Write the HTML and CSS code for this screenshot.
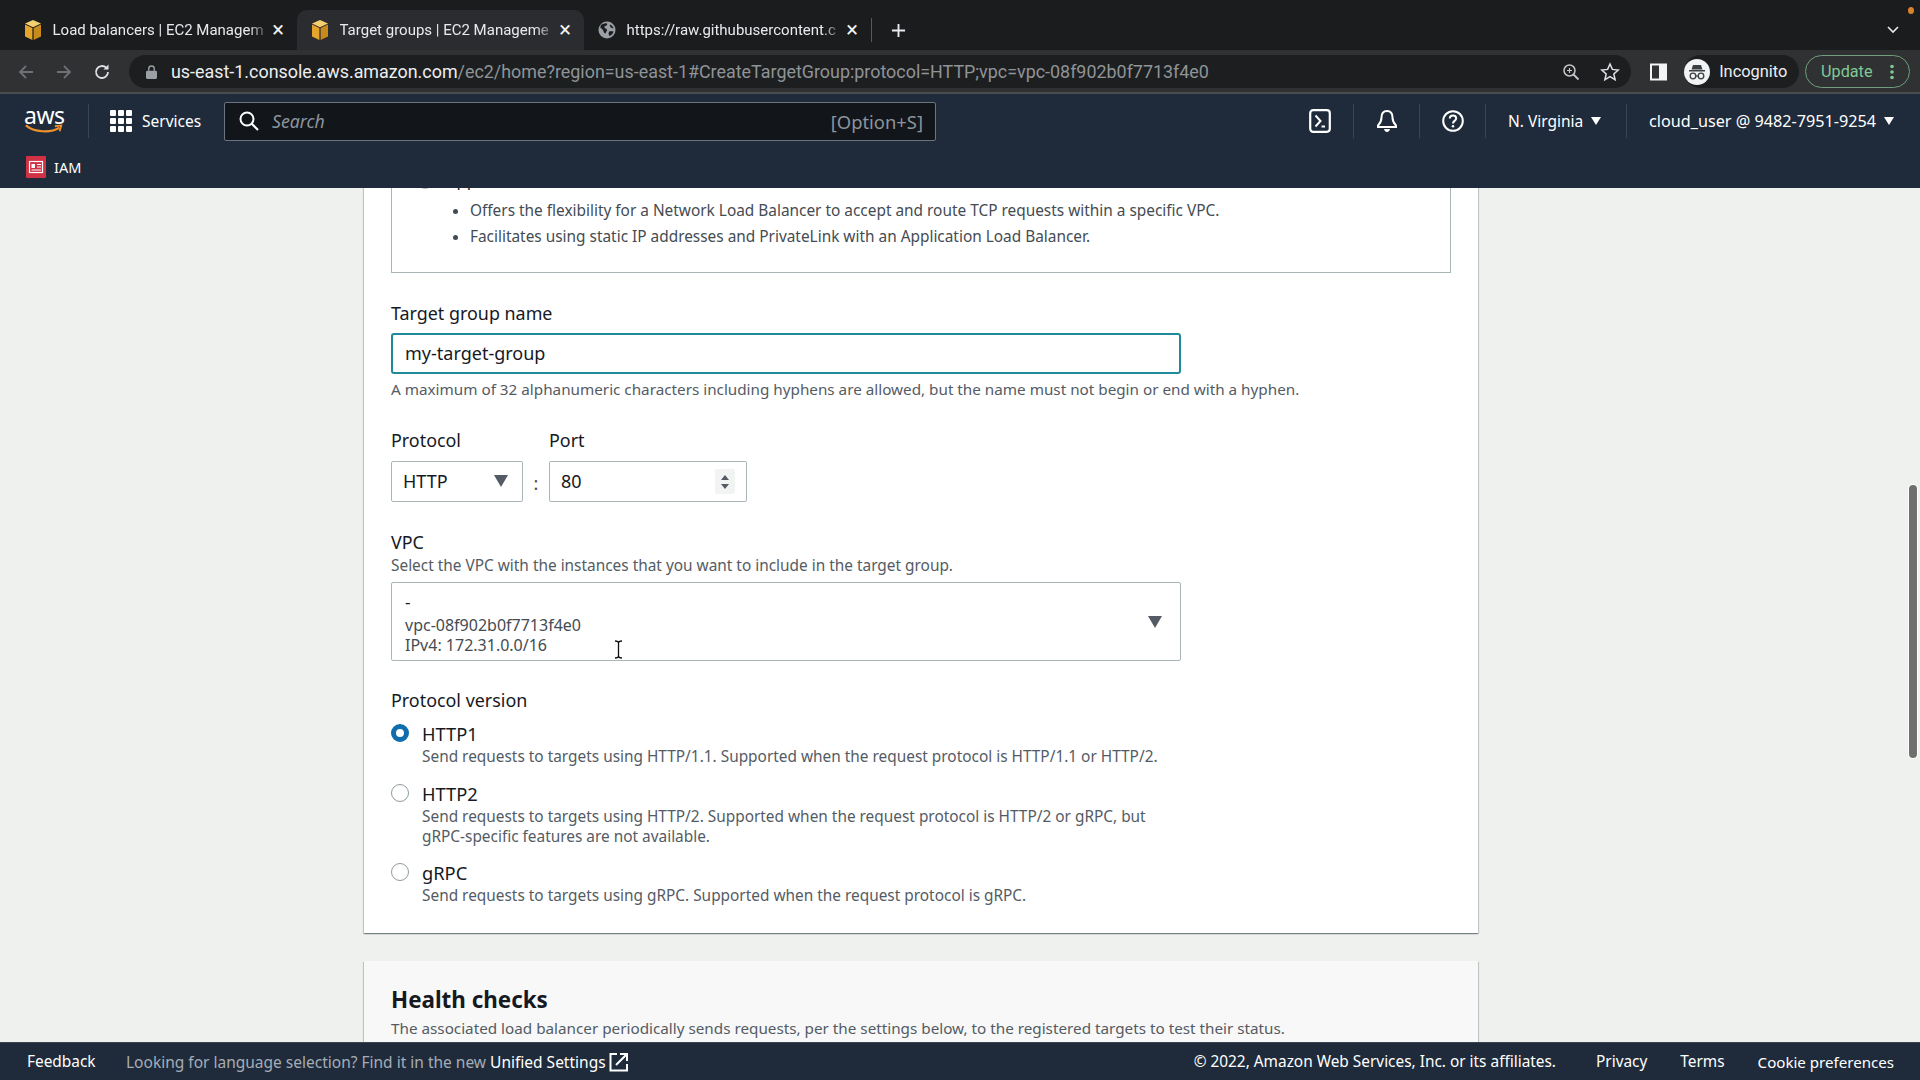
FILE: index.html
```html
<!DOCTYPE html>
<html lang="en">
<head>
<meta charset="utf-8">
<title>Target groups | EC2 Management Console</title>
<link rel="stylesheet" href="styles.css">
</head>
<body>
<header class="browser">
  <div class="tabstrip">
    <div class="tab">
      <svg class="tab-icon" viewBox="0 0 18 20"><path fill="#f3cf6d" d="M9 0l8 3.6-8 3.6-8-3.6z"/><path fill="#e5a52c" d="M1 4.6l7.4 3.4V20L1 16.4z"/><path fill="#c98a1c" d="M17 4.6L9.6 8V20l7.4-3.6z"/></svg>
      <span class="tab-title">Load balancers | EC2 Managem</span>
      <span class="tab-close">×</span>
    </div>
    <div class="tab tab-active">
      <svg class="tab-icon" viewBox="0 0 18 20"><path fill="#f3cf6d" d="M9 0l8 3.6-8 3.6-8-3.6z"/><path fill="#e5a52c" d="M1 4.6l7.4 3.4V20L1 16.4z"/><path fill="#c98a1c" d="M17 4.6L9.6 8V20l7.4-3.6z"/></svg>
      <span class="tab-title">Target groups | EC2 Manageme</span>
      <span class="tab-close">×</span>
    </div>
    <div class="tab">
      <svg class="tab-icon" viewBox="0 0 18 18"><circle cx="9" cy="9" r="8.5" fill="#9aa0a6"/><path fill="#1c1d1f" d="M3 4c2-1 4-2 6-1.500 1 1-1 2.500-2.500 3-1 1 1.500 2 2.500 3 .5 1.500-1 2-1.500 4-1.500 0-2-2-2.500-3.500C4 8 3 7 2.200 6.500zM12 3.500c1.500.5 3 2 3.500 3.500-1 .5-2 0-2.500-.5s-1.500-1.500-1-3zM11 10.500c1.500-.5 3-.5 4.500 0-.5 2-2 3.500-4 4.500-1-1-1-3-.5-4.500z"/></svg>
      <span class="tab-title">https://raw.githubusercontent.c</span>
      <span class="tab-close">×</span>
    </div>
    <span class="tab-sep"></span>
    <svg class="new-tab" viewBox="0 0 16 16"><path d="M8 1v14M1 8h14" stroke="#e8eaed" stroke-width="2"/></svg>
    <span class="strip-fill"></span>
    <span class="recording-dot"></span>
    <svg class="tab-list" viewBox="0 0 12 8"><path d="M1 1l5 5 5-5" fill="none" stroke="#e8eaed" stroke-width="1.600"/></svg>
  </div>
  <div class="toolbar">
    <svg class="tool tool-dim" viewBox="0 0 18 18"><path d="M16 9H3M9 3L3 9l6 6" fill="none" stroke="#6d7074" stroke-width="1.800"/></svg>
    <svg class="tool tool-dim" viewBox="0 0 18 18"><path d="M2 9h13M9 3l6 6-6 6" fill="none" stroke="#6d7074" stroke-width="1.800"/></svg>
    <svg class="tool" viewBox="0 0 18 18"><path d="M15 9a6 6 0 1 1-1.800-4.300" fill="none" stroke="#dfe1e5" stroke-width="1.800"/><path d="M15.500 1.500v5h-5z" fill="#dfe1e5"/></svg>
    <div class="omnibox">
      <svg class="lock" viewBox="0 0 12 15"><path d="M3 6V4a3 3 0 0 1 6 0v2" fill="none" stroke="#9aa0a6" stroke-width="1.500"/><rect y="6" width="12" height="9" rx="1.500" fill="#9aa0a6"/></svg>
      <span class="url"><span class="url-host">us-east-1.console.aws.amazon.com</span>/ec2/home?region=us-east-1#CreateTargetGroup:protocol=HTTP;vpc=vpc-08f902b0f7713f4e0</span>
      <svg class="omni-icon" viewBox="0 0 18 18"><circle cx="7.500" cy="7.500" r="5.500" fill="none" stroke="#c4c7cb" stroke-width="1.500"/><path d="M5 7.500h5M7.500 5v5" stroke="#c4c7cb" stroke-width="1.200"/><path d="M11.500 11.500L16.500 16.500" stroke="#c4c7cb" stroke-width="1.800"/></svg>
      <svg class="omni-icon omni-star" viewBox="0 0 20 20"><path d="M10 2l2.400 5.400 5.800.6-4.400 3.900 1.300 5.800L10 14.700l-5.100 3 1.300-5.800L1.800 8l5.800-.6z" fill="none" stroke="#dfe1e5" stroke-width="1.500"/></svg>
    </div>
    <svg class="panel-icon" viewBox="0 0 17 17"><rect x="1" y="1" width="15" height="15" fill="none" stroke="#f1f3f4" stroke-width="2"/><rect x="9" y="1" width="7" height="15" fill="#f1f3f4"/></svg>
    <div class="incognito">
      <svg class="incognito-avatar" viewBox="0 0 26 26"><circle cx="13" cy="13" r="13" fill="#f1f3f4"/><path fill="#3c4043" d="M9 6h8l1.500 4.500h-11zM5 11h16v1.400H5z"/><circle cx="9" cy="17" r="2.800" fill="none" stroke="#3c4043" stroke-width="1.300"/><circle cx="17" cy="17" r="2.800" fill="none" stroke="#3c4043" stroke-width="1.300"/><path d="M11.800 17h2.400" stroke="#3c4043" stroke-width="1.200"/></svg>
      <span>Incognito</span>
    </div>
    <div class="update">
      <span>Update</span>
      <svg class="update-dots" viewBox="0 0 4 16"><circle cx="2" cy="2.500" r="1.800"/><circle cx="2" cy="8" r="1.800"/><circle cx="2" cy="13.500" r="1.800"/></svg>
    </div>
  </div>
</header>

<nav class="console-nav">
  <div class="nav-top">
    <div class="aws-logo">
      <span class="aws-word">aws</span>
      <svg class="aws-smile" viewBox="0 0 42 11"><path d="M1 1.500C10 9 28 10.500 38 4" fill="none" stroke="#ec912d" stroke-width="2.400"/><path d="M33 2.500l7-.9-1.800 6.500" fill="none" stroke="#ec912d" stroke-width="2"/></svg>
    </div>
    <span class="nav-vsep nav-vsep-logo"></span>
    <svg class="grid-icon" viewBox="0 0 22 22"><g fill="#fff"><rect width="6" height="6" rx="1"/><rect x="8" width="6" height="6" rx="1"/><rect x="16" width="6" height="6" rx="1"/><rect y="8" width="6" height="6" rx="1"/><rect x="8" y="8" width="6" height="6" rx="1"/><rect x="16" y="8" width="6" height="6" rx="1"/><rect y="16" width="6" height="6" rx="1"/><rect x="8" y="16" width="6" height="6" rx="1"/><rect x="16" y="16" width="6" height="6" rx="1"/></g></svg>
    <span class="nav-services">Services</span>
    <div class="search">
      <svg class="search-icon" viewBox="0 0 20 20"><circle cx="8" cy="8" r="6.500" fill="none" stroke="#fff" stroke-width="2"/><path d="M12.800 12.800L19 19" stroke="#fff" stroke-width="2.200"/></svg>
      <span class="search-placeholder">Search</span>
      <span class="search-shortcut">[Option+S]</span>
    </div>
    <span class="nav-fill"></span>
    <div class="nav-item nav-icon-item">
      <svg class="nav-icon" viewBox="0 0 22 24"><rect x="1.200" y="1.200" width="19.600" height="21.600" rx="3" fill="none" stroke="#fff" stroke-width="2.200"/><path d="M6.500 6.500l5 5.500-5 5.500M12.500 17.500h3.500" fill="none" stroke="#fff" stroke-width="2"/></svg>
    </div>
    <div class="nav-item nav-icon-item">
      <svg class="nav-icon" viewBox="0 0 22 24"><path d="M11 2c-3.800 0-5.500 3-5.500 6.500 0 4-1.500 6-3.500 8v1.500h18v-1.500c-2-2-3.500-4-3.500-8C16.500 5 14.800 2 11 2z" fill="none" stroke="#fff" stroke-width="2"/><path d="M8 20c.5 2 1.500 3 3 3s2.500-1 3-3z" fill="#fff"/></svg>
    </div>
    <div class="nav-item nav-icon-item">
      <svg class="nav-icon" viewBox="0 0 22 22"><circle cx="11" cy="11" r="9.800" fill="none" stroke="#fff" stroke-width="2"/><path d="M7.800 8.500C7.800 6.500 9.300 5.500 11 5.500s3.200 1 3.200 2.800c0 2.700-3.200 2.500-3.200 5.200" fill="none" stroke="#fff" stroke-width="2"/><circle cx="11" cy="16.300" r="1.300" fill="#fff"/></svg>
    </div>
    <div class="nav-item nav-region">N. Virginia<svg class="nav-caret" viewBox="0 0 10 8"><path d="M0 0h10L5 8z"/></svg></div>
    <div class="nav-item nav-user">cloud_user @ 9482-7951-9254<svg class="nav-caret" viewBox="0 0 10 8"><path d="M0 0h10L5 8z"/></svg></div>
  </div>
  <div class="nav-bottom">
    <svg class="iam-icon" viewBox="0 0 20 22"><rect width="20" height="22" rx="1" fill="#d13144"/><rect x="3.500" y="5.500" width="13" height="11" fill="none" stroke="#fff" stroke-width="1.200"/><rect x="5.500" y="8" width="3.500" height="4" fill="#fff"/><path d="M11 8.500h4M11 11h4M5.500 14h9.500" stroke="#fff" stroke-width="1"/></svg>
    <span>IAM</span>
  </div>
</nav>

<main class="main">
  <section class="card">
    <div class="option-box">
      <div class="option-title"><span class="option-radio"></span>Application Load Balancer</div>
      <ul class="option-list">
        <li>Offers the flexibility for a Network Load Balancer to accept and route TCP requests within a specific VPC.</li>
        <li>Facilitates using static IP addresses and PrivateLink with an Application Load Balancer.</li>
      </ul>
    </div>

    <div class="field-label name-label">Target group name</div>
    <div class="text-input">my-target-group</div>
    <div class="hint name-hint">A maximum of 32 alphanumeric characters including hyphens are allowed, but the name must not begin or end with a hyphen.</div>

    <div class="proto-row">
      <div class="proto-col">
        <div class="field-label">Protocol</div>
        <div class="select-box proto-select">HTTP<svg class="select-caret" viewBox="0 0 14 12"><path d="M0 0h14L7 12z"/></svg></div>
      </div>
      <span class="proto-colon">:</span>
      <div class="proto-col">
        <div class="field-label">Port</div>
        <div class="select-box port-input">80<span class="spinner-bg"><svg class="spinner" viewBox="0 0 10 16"><path d="M5 1l4 5H1zM5 15L1 10h8z"/></svg></span></div>
      </div>
    </div>

    <div class="field-label vpc-label">VPC</div>
    <div class="hint vpc-hint">Select the VPC with the instances that you want to include in the target group.</div>
    <div class="vpc-box">
      <div class="vpc-name">-</div>
      <div class="vpc-id">vpc-08f902b0f7713f4e0</div>
      <div class="vpc-id">IPv4: 172.31.0.0/16</div>
      <svg class="select-caret vpc-caret" viewBox="0 0 14 12"><path d="M0 0h14L7 12z"/></svg>
      <svg class="ibeam" viewBox="0 0 9 19"><path d="M1 1c2 0 3.500.5 3.500 2v13c0 1.500-1.500 2-3.500 2M8 1c-2 0-3.500.5-3.500 2v13c0 1.500 1.500 2 3.500 2" fill="none" stroke="#111" stroke-width="1.300"/></svg>
    </div>

    <div class="field-label version-label">Protocol version</div>
    <div class="radio-row first-radio"><span class="radio radio-on"></span><span class="radio-label">HTTP1</span></div>
    <div class="radio-desc">Send requests to targets using HTTP/1.1. Supported when the request protocol is HTTP/1.1 or HTTP/2.</div>
    <div class="radio-row second-radio"><span class="radio"></span><span class="radio-label">HTTP2</span></div>
    <div class="radio-desc">Send requests to targets using HTTP/2. Supported when the request protocol is HTTP/2 or gRPC, but<br>gRPC-specific features are not available.</div>
    <div class="radio-row third-radio"><span class="radio"></span><span class="radio-label">gRPC</span></div>
    <div class="radio-desc">Send requests to targets using gRPC. Supported when the request protocol is gRPC.</div>
  </section>

  <section class="card card-health">
    <h2 class="card-title">Health checks</h2>
    <div class="hint health-hint">The associated load balancer periodically sends requests, per the settings below, to the registered targets to test their status.</div>
  </section>

  <div class="scrollbar"></div>
</main>

<footer class="footer">
  <span class="foot-feedback">Feedback</span>
  <span class="foot-note">Looking for language selection? Find it in the new <span class="foot-link">Unified Settings</span></span>
  <svg class="foot-ext" viewBox="0 0 20 20"><path d="M8 2H1.500v16.500h16.500V12" fill="none" stroke="#fff" stroke-width="2"/><path d="M7 13L17 3M11 2h7v7" fill="none" stroke="#fff" stroke-width="2"/></svg>
  <span class="foot-fill"></span>
  <span class="foot-copy">© 2022, Amazon Web Services, Inc. or its affiliates.</span>
  <span class="foot-a foot-privacy">Privacy</span>
  <span class="foot-a">Terms</span>
  <span class="foot-a foot-cookie">Cookie preferences</span>
</footer>
</body>
</html>
```

FILE: styles.css
```css
* { box-sizing: border-box; }
html, body { margin: 0; height: 100%; }
body {
  width: 1920px;
  height: 1080px;
  overflow: hidden;
  display: flex;
  flex-direction: column;
  font-family: "Noto Sans", "Liberation Sans", sans-serif;
  color: #16191f;
  background: #eff1ef;
}

/* Browser chrome */
.browser { flex: none; height: 94px; background: #1b1c1e; font-family: Roboto, "Liberation Sans", sans-serif; }
.tabstrip { height: 50px; display: flex; align-items: flex-end; padding-left: 10px; }
.tab { width: 287px; height: 40px; display: flex; align-items: center; padding: 0 11px 0 14px; color: #e8eaed; font-size: 15px; border-radius: 10px 10px 0 0; }
.tab-active { background: #2b2c2f; }
.tab-icon { width: 18px; height: 20px; flex: none; margin-right: 10.500px; }
.tab-title { flex: 1; min-width: 0; white-space: nowrap; -webkit-mask-image: linear-gradient(90deg, #000 90%, transparent); mask-image: linear-gradient(90deg, #000 90%, transparent); }
.tab-close { width: 16px; flex: none; text-align: center; font-size: 22px; line-height: 22px; color: #f1f3f4; }
.tab-sep { width: 1px; height: 24px; background: #55585c; margin-bottom: 8px; }
.new-tab { width: 15px; height: 15px; margin: 0 0 12px 19px; }
.strip-fill { flex: 1; }
.recording-dot { position: absolute; left: 1908px; top: 7px; width: 6px; height: 7px; border-radius: 50%; background: #d9822b; }
.tab-list { width: 12px; height: 8px; margin: 0 21px 16px 0; }

.toolbar { height: 44px; background: #2f3133; border-bottom: 2px solid #4a4c4e; display: flex; align-items: center; padding: 1px 10px 0 17px; }
.tool { width: 18px; height: 18px; flex: none; margin-right: 20px; }
.tool + .omnibox { margin-left: -2px; }
.omnibox { width: 1503px; height: 33px; border-radius: 17px; background: #1d1e20; display: flex; align-items: center; padding: 0 10px 0 17px; }
.lock { width: 11px; height: 14px; flex: none; margin-right: 14px; }
.url { flex: 1; font-size: 17.900px; color: #8f9498; white-space: nowrap; min-width: 0; }
.url-host { color: #eceef0; }
.omni-icon { width: 18px; height: 18px; flex: none; margin-left: 20px; }
.omni-star { width: 20px; height: 20px; margin-right: 1px; }
.panel-icon { width: 17px; height: 18px; flex: none; margin-left: 19px; }
.incognito { margin-left: 17px; width: 115px; height: 33px; border-radius: 17px; background: #1d1e20; display: flex; align-items: center; color: #eceef0; font-size: 16.400px; }
.incognito-avatar { width: 26px; height: 26px; flex: none; margin-right: 9px; }
.update { margin-left: 6px; width: 105px; height: 33px; border-radius: 17px; border: 1px solid #6f9f7c; display: flex; align-items: center; padding-left: 15px; color: #81c995; font-size: 16.200px; }
.update-dots { width: 4px; height: 16px; margin-left: 18px; fill: #81c995; }

/* Console nav */
.console-nav { flex: none; height: 94px; background: #1f2b3b; color: #fff; font-size: 15.500px; z-index: 2; }
.nav-top { height: 54px; display: flex; align-items: center; padding-left: 24px; }
.aws-logo { width: 40px; height: 30px; flex: none; margin-top: -3px; }
.aws-word { display: block; font-size: 23px; line-height: 20px; letter-spacing: -.5px; }
.aws-smile { display: block; width: 40px; height: 10px; margin-top: -1px; }
.nav-vsep { width: 1px; height: 34px; background: #3a4553; }
.nav-vsep-logo { margin-left: 24px; }
.grid-icon { width: 22px; height: 22px; flex: none; margin-left: 21px; }
.nav-services { margin-left: 10px; width: 82px; }
.search { width: 712px; height: 39px; flex: none; background: #12161b; border: 1px solid #6b7480; border-radius: 2px; display: flex; align-items: center; padding: 0 12px 0 14px; }
.search-icon { width: 20px; height: 20px; flex: none; margin-right: 13px; }
.search-placeholder { flex: 1; font-style: italic; color: #8d949c; font-size: 17.700px; }
.search-shortcut { color: #8d949c; font-size: 18.400px; }
.nav-fill { flex: 1; }
.nav-item { height: 34px; display: flex; align-items: center; border-left: 1px solid #3a4553; }
.nav-icon-item { width: 66px; justify-content: center; }
.search + .nav-fill + .nav-icon-item { border-left: 0; }
.nav-icon { width: 22px; height: 24px; }
.nav-region { width: 141px; padding-left: 22px; }
.nav-user { width: 294px; padding-left: 22px; font-size: 16.200px; }
.nav-caret { width: 10px; height: 8px; fill: #fff; margin-left: 8px; }
.nav-bottom { height: 40px; display: flex; align-items: center; padding: 0 0 2px 26px; font-size: 14.500px; }
.iam-icon { width: 20px; height: 22px; margin-right: 8px; }

/* Main scroll area */
.main { flex: 1; min-height: 0; overflow: hidden; position: relative; padding-left: 364px; }
.card { width: 1114px; margin-top: -40px; padding: 0 27px 27px; background: #fff; box-shadow: 0 1px 1px 0 rgba(0,28,36,.35), 1px 1px 1px 0 rgba(0,28,36,.15), -1px 1px 1px 0 rgba(0,28,36,.15); }
.card-health { margin-top: 28px; padding-top: 24px; background: #f7f8f7; }
.card-title { margin: 0; font-size: 22.400px; line-height: 30px; font-weight: 700; color: #16191f; }
.health-hint { margin-top: 3px; }

.option-box { height: 125px; padding-top: 20px; border: 1px solid #aab7b8; }
.option-title { height: 22px; line-height: 22px; font-size: 16.500px; display: flex; align-items: center; padding-left: 24px; }
.option-radio { width: 18px; height: 18px; border-radius: 50%; border: 1px solid #aab7b8; margin-right: 12px; }
.option-list { margin: 7px 0 0; padding: 0 0 0 78px; font-size: 15.400px; line-height: 26px; color: #444b52; }

.field-label { font-size: 17.900px; line-height: 22px; color: #16191f; }
.name-label { margin-top: 29px; }
.text-input { margin-top: 9px; width: 790px; height: 41px; padding-left: 12px; line-height: 37px; font-size: 18px; border: 2px solid #1f8a99; border-radius: 3px; background: #fff; }
.hint { font-size: 15.250px; line-height: 20px; color: #545b64; }
.name-hint { margin-top: 5px; }

.proto-row { margin-top: 30px; display: flex; align-items: flex-end; }
.proto-col { display: flex; flex-direction: column; }
.select-box { margin-top: 10px; height: 41px; padding-bottom: 1px; display: flex; align-items: center; border: 1px solid #aab7b8; border-radius: 2px; font-size: 18px; position: relative; }
.proto-select { width: 132px; padding-left: 11px; }
.port-input { width: 198px; padding-left: 11px; }
.proto-colon { width: 26px; text-align: center; font-size: 18px; line-height: 38px; color: #444b52; }
.select-caret { width: 14px; height: 12px; fill: #545b64; position: absolute; right: 14px; top: 13px; }
.spinner-bg { position: absolute; right: 11px; top: 7px; width: 20px; height: 25px; background: #f2f3f3; border-radius: 2px; display: flex; align-items: center; justify-content: center; }
.spinner { width: 10px; height: 16px; fill: #545b64; }

.vpc-label { margin-top: 29px; }
.vpc-hint { margin-top: 3px; font-size: 15.400px; }
.vpc-box { position: relative; margin-top: 6px; width: 790px; height: 79px; padding: 8px 0 0 13px; border: 1px solid #aab7b8; border-radius: 2px; }
.vpc-name { font-size: 17px; line-height: 22px; }
.vpc-id { font-size: 16px; line-height: 20px; color: #444b52; }
.vpc-name + .vpc-id { margin-top: 2px; }
.vpc-caret { right: 18px; top: 33px; }
.ibeam { position: absolute; left: 222px; top: 57px; width: 9px; height: 19px; }

.version-label { margin-top: 28px; }
.radio-row { display: flex; align-items: center; height: 22px; }
.first-radio { margin-top: 11px; }
.second-radio { margin-top: 15px; }
.third-radio { margin-top: 14px; }
.radio { width: 18px; height: 18px; flex: none; border-radius: 50%; border: 1px solid #8f9ba0; background: #fff; margin-right: 13px; }
.radio-on { border: 5px solid #0f6cad; }
.radio-label { font-size: 18.300px; }
.radio-desc { margin: 3px 0 0 31px; font-size: 15.400px; line-height: 20px; color: #545b64; }

.scrollbar { position: absolute; left: 1909px; top: 297px; width: 8px; height: 273px; border-radius: 4px; background: #6f6f6f; box-shadow: 0 0 0 1px #fff; }

/* Footer */
.footer { flex: none; height: 38px; background: #1f2b3b; border-top: 1px solid #3b4654; display: flex; align-items: center; padding: 0 26px 0 27px; color: #fff; font-size: 15.400px; z-index: 2; }
.foot-feedback { width: 99px; }
.foot-note { color: #a6adb5; font-size: 15.500px; }
.foot-link { color: #fff; }
.foot-ext { width: 20px; height: 20px; margin-left: 3px; }
.foot-fill { flex: 1; }
.foot-a { margin-left: 33px; }
.foot-privacy { margin-left: 40px; }
.foot-cookie { font-size: 15.100px; }
```
